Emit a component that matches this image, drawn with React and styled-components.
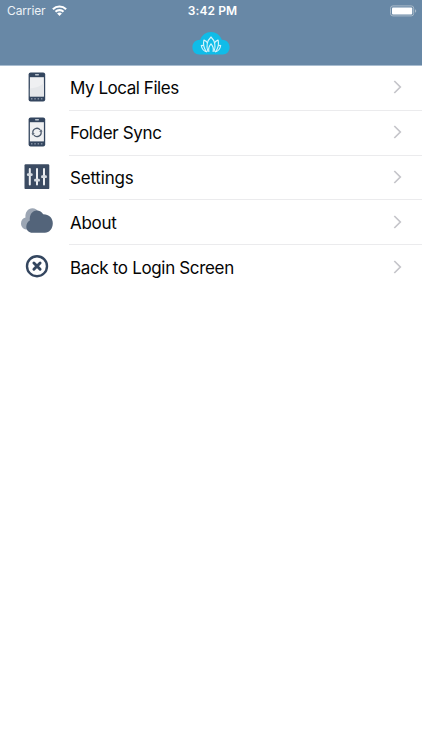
import React from 'react';
import styled, { createGlobalStyle } from 'styled-components';

const GlobalStyle = createGlobalStyle`
  * { box-sizing: border-box; }
  body { margin: 0; background: #fff; font-family: Inter, "Liberation Sans", sans-serif; }
`;

const Screen = styled.main`
  min-height: 750px;
  background: #fff;
`;

const Header = styled.header`
  height: 66px;
  background: #6888a6;
  border-bottom: 1px solid #a9bdd0;
  color: #fff;
`;

const StatusBar = styled.div`
  display: grid;
  grid-template-columns: 1fr auto 1fr;
  align-items: center;
  height: 22px;
  padding: 0 5px 0 7px;
`;

const Carrier = styled.div`
  display: flex;
  align-items: center;
  gap: 6px;
  font-size: 12px;
  line-height: 22px;
  color: #edf2f6;
  letter-spacing: -0.12px;
`;

const Time = styled.time`
  padding-left: 1px;
  font-size: 12px;
  font-weight: 600;
  line-height: 22px;
  letter-spacing: 0.12px;
`;

const Battery = styled.svg`
  justify-self: end;
  width: 27px;
  height: 12px;
  margin-top: -1px;
`;

const Wifi = styled.svg`
  width: 15px;
  height: 11px;
  margin-top: -1px;
`;

const NavBar = styled.div`
  display: flex;
  justify-content: center;
  padding-top: 9px;
`;

const Logo = styled.svg`
  width: 38px;
  height: 24px;
`;

const Menu = styled.nav`
  display: flex;
  flex-direction: column;
`;

const Row = styled.a`
  display: flex;
  height: 44.8px;
  padding-left: 14px;
  color: #050505;
`;

const Icon = styled.svg`
  flex: none;
  width: 46px;
  height: 44.8px;
`;

const RowBody = styled.div`
  flex: 1;
  display: flex;
  align-items: center;
  justify-content: space-between;
  margin-left: 9px;
  padding: 0 20px 0 1px;
  border-bottom: 1px solid ${(p) => (p.$last ? 'transparent' : '#ebebed')};
`;

const Label = styled.span`
  padding-top: 1px;
  font-size: 17px;
  line-height: 22px;
  letter-spacing: ${(p) => p.$tracking}px;
  white-space: nowrap;
`;

const Chevron = styled.svg`
  width: 9px;
  height: 14px;
  margin-top: -1px;
`;

function Phone({ y, children }) {
  return (
    <Icon viewBox="0 0 46 44.8">
      <g transform={`translate(0 ${y})`}>
        <rect x="14.6" y="6.4" width="16.6" height="29" rx="2" fill="#34465f" />
        <rect x="15.9" y="11.2" width="14" height="19.2" fill="#eff0f2" />
        <rect x="21" y="8.1" width="4" height="1.3" rx=".6" fill="#b9c2cd" />
        <g fill="#8996a7">
          <rect x="17" y="32.1" width="1.5" height="1.4" />
          <rect x="20.3" y="32.1" width="1.5" height="1.4" />
          <rect x="23.6" y="32.1" width="1.5" height="1.4" />
          <rect x="26.9" y="32.1" width="1.5" height="1.4" />
        </g>
        {children}
      </g>
    </Icon>
  );
}

const LocalFilesIcon = () => (
  <Phone y={0}>
    <path d="M15.9 22.5C22 22 27 20 29.9 17V30.4h-14Z" fill="#e5e7ea" />
  </Phone>
);

const SyncIcon = () => (
  <Phone y={0}>
    <g fill="none" stroke="#4b596c" strokeWidth="1.3">
      <path d="M19 22.5A4.1 4.1 0 0 1 26.1 18.8" />
      <path d="M27 20.4A4.1 4.1 0 0 1 19.9 24.1" />
    </g>
    <path d="m25.3 20.9 3.2-.4-1.5-2.2ZM20.7 22l-3.2.4 1.5 2.2Z" fill="#4b596c" />
  </Phone>
);

const SettingsIcon = () => (
  <Icon viewBox="0 0 46 44.8">
    <rect x="10.5" y="8.3" width="24.8" height="24.8" rx="1.2" fill="#3b4b62" />
    <g fill="#eef0f3">
      <rect x="14.8" y="12.1" width="2" height="17.4" rx="1" />
      <rect x="22" y="12.1" width="2" height="17.4" rx="1" />
      <rect x="29" y="12.1" width="2" height="17.4" rx="1" />
    </g>
    <g fill="#d5dae0">
      <rect x="12.9" y="17.2" width="5.8" height="2.8" rx="1.2" />
      <rect x="20.1" y="22.8" width="5.8" height="2.8" rx="1.2" />
      <rect x="27.1" y="19.3" width="5.8" height="2.8" rx="1.2" />
    </g>
  </Icon>
);

const AboutIcon = () => (
  <Icon viewBox="0 0 46 44.8">
    <path d="M13.5 29.8C9.8 29.6 7 27 7 23.5c0-3 1.8-5.1 4.5-5.9C10.9 12.3 14 8.2 18.4 8.2c2.7 0 4.8 1.3 6 3.7L19 29.8Z" fill="#9ca6b4" />
    <path d="M18.5 32.7c-3.7 0-6.2-2.6-6.2-6 0-3 1.4-5 3.5-6.3-.5-5.7 2.5-10 7-10 2.9 0 5.1 1.4 6.4 3.8 5.6-.1 9.6 3.7 9.6 9 0 5.6-3.5 9.5-7.9 9.5Z" fill="#53647a" />
  </Icon>
);

const BackIcon = () => (
  <Icon viewBox="0 0 46 44.8">
    <circle cx="23" cy="21.2" r="10" fill="none" stroke="#34465f" strokeWidth="2.4" />
    <path d="m19.9 18.1 6.2 6.2m0-6.2-6.2 6.2" stroke="#34465f" strokeWidth="2.9" strokeLinecap="round" />
  </Icon>
);

const items = [
  { label: 'My Local Files', icon: LocalFilesIcon, tracking: -0.45 },
  { label: 'Folder Sync', icon: SyncIcon, tracking: -0.35 },
  { label: 'Settings', icon: SettingsIcon, tracking: -0.2 },
  { label: 'About', icon: AboutIcon, tracking: -0.3 },
  { label: 'Back to Login Screen', icon: BackIcon, tracking: -0.34 },
];

export default function App() {
  return (
    <Screen>
      <GlobalStyle />
      <Header>
        <StatusBar>
          <Carrier>
            Carrier
            <Wifi viewBox="0 0 15 11" fill="none" stroke="#fff" strokeWidth="2.1">
              <path d="M.9 4.2c3.7-3.7 9.5-3.7 13.2 0M3.5 6.8c2.2-2.2 5.8-2.2 8 0" />
              <path d="m7.5 11-2.4-2.5c1.3-1.2 3.5-1.2 4.8 0Z" fill="#fff" stroke="none" />
            </Wifi>
          </Carrier>
          <Time>3:42 PM</Time>
          <Battery viewBox="0 0 27 12">
            <rect x=".5" y=".9" width="23.2" height="10" rx="2.4" fill="none" stroke="#a9bac9" />
            <rect x="2" y="2.4" width="20.2" height="7.2" rx="1" fill="#fff" />
            <path d="M25 4.2c1.7.6 1.7 2.9 0 3.5Z" fill="#a9bac9" />
          </Battery>
        </StatusBar>
        <NavBar>
          <Logo viewBox="0 0 38 24">
            <path d="M7.2 23.4C3.2 23.4.4 20.3.4 16.2c0-4.5 3.2-7.5 7.8-7.5C10 4 14 1 19 1s9 3 10.8 7.7c4.6 0 7.8 3 7.8 7.5 0 4.1-2.8 7.2-6.8 7.2Z" fill="#10bce8" />
            <g fill="none" stroke="#d8f5fc" strokeWidth="1.15" strokeLinejoin="round">
              <path d="M16 20.8C13.6 14 15.6 9.3 19 6c3.4 3.3 5.4 8 3 14.8" />
              <path d="M17 20.8c-.8-3 .2-6 2-8 1.8 2 2.8 5 2 8" />
              <path d="M14.4 20.6c-2.6-3.6-3.5-7.3-2.5-11.5 1.7.8 2.8 1.6 3.7 2.8M23.6 20.6c2.6-3.6 3.5-7.3 2.5-11.5-1.7.8-2.8 1.6-3.7 2.8" />
              <path d="M15 20.9c-3.4-.8-5.2-3.1-5.7-6.4.8-.2 1.6-.1 2.4.2M23 20.9c3.4-.8 5.2-3.1 5.7-6.4-.8-.2-1.6-.1-2.4.2" />
            </g>
          </Logo>
        </NavBar>
      </Header>
      <Menu>
        {items.map(({ label, icon: ItemIcon, tracking }, i) => (
          <Row key={label}>
            <ItemIcon />
            <RowBody $last={i === items.length - 1}>
              <Label $tracking={tracking}>{label}</Label>
              <Chevron viewBox="0 0 9 14">
                <path d="m1.3 1 6 6-6 6" fill="none" stroke="#c5c5ca" strokeWidth="1.7" />
              </Chevron>
            </RowBody>
          </Row>
        ))}
      </Menu>
    </Screen>
  );
}
